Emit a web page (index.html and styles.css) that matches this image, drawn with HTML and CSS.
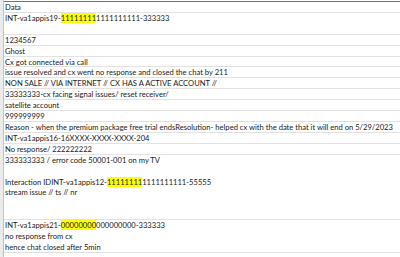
FILE: index.html
```html
<!DOCTYPE html>
<html>
<head>
<meta charset="utf-8">
<link rel="stylesheet" href="styles.css">
</head>
<body>
<div class="sheet">
  <div class="gutter"></div>
  <div class="grid">
    <div class="cell">Data</div>
    <div class="cell">INT-va1appis19-<span class="hl">11111111</span>1111111111-333333<br>&nbsp;</div>
    <div class="cell">1234567</div>
    <div class="cell">Ghost</div>
    <div class="cell">Cx got connected via call</div>
    <div class="cell">issue resolved and cx went no response and closed the chat by 211</div>
    <div class="cell">NON SALE // VIA INTERNET // CX HAS A ACTIVE ACCOUNT //</div>
    <div class="cell">33333333-cx facing signal issues/ reset receiver/</div>
    <div class="cell">satellite account</div>
    <div class="cell">999999999</div>
    <div class="cell">Reason - when the premium package free trial endsResolution- helped cx with the date that it will end on 5/29/2023</div>
    <div class="cell">INT-va1appis16-16XXXX-XXXX-XXXX-204</div>
    <div class="cell">No response/ 222222222</div>
    <div class="cell">333333333 / error code 50001-001 on my TV<br>&nbsp;<br>Interaction IDINT-va1appis12-<span class="hl">11111111</span>1111111111-55555<br>stream issue // ts // nr<br>&nbsp;<br>&nbsp;</div>
    <div class="cell">INT-va1appis21-<span class="hl">00000000</span>000000000-333333<br>no response from cx<br>hence chat closed after 5min</div>
  </div>
</div>
</body>
</html>
```

FILE: styles.css
```css
html, body {
  margin: 0;
  padding: 0;
  background: #ffffff;
}

.sheet {
  display: flex;
  width: 400px;
  height: 257px;
  overflow: hidden;
  font-family: Lato, "Liberation Sans", Arial, sans-serif;
  font-size: 7.6px;
  color: #1a1a1a;
}

.gutter {
  width: 3px;
  flex: none;
  background: #ebebeb;
  border-right: 1px solid #c4c4c4;
}

.grid {
  flex: 1;
  display: flex;
  flex-direction: column;
  margin-top: 1px;
  border-top: 1px solid #3f8f58;
}

.cell {
  padding-left: 1px;
  line-height: 10.9px;
  white-space: nowrap;
  box-shadow: inset 0 -1px 0 #e2e2e2;
}

.hl {
  background: #ffff00;
}
```
